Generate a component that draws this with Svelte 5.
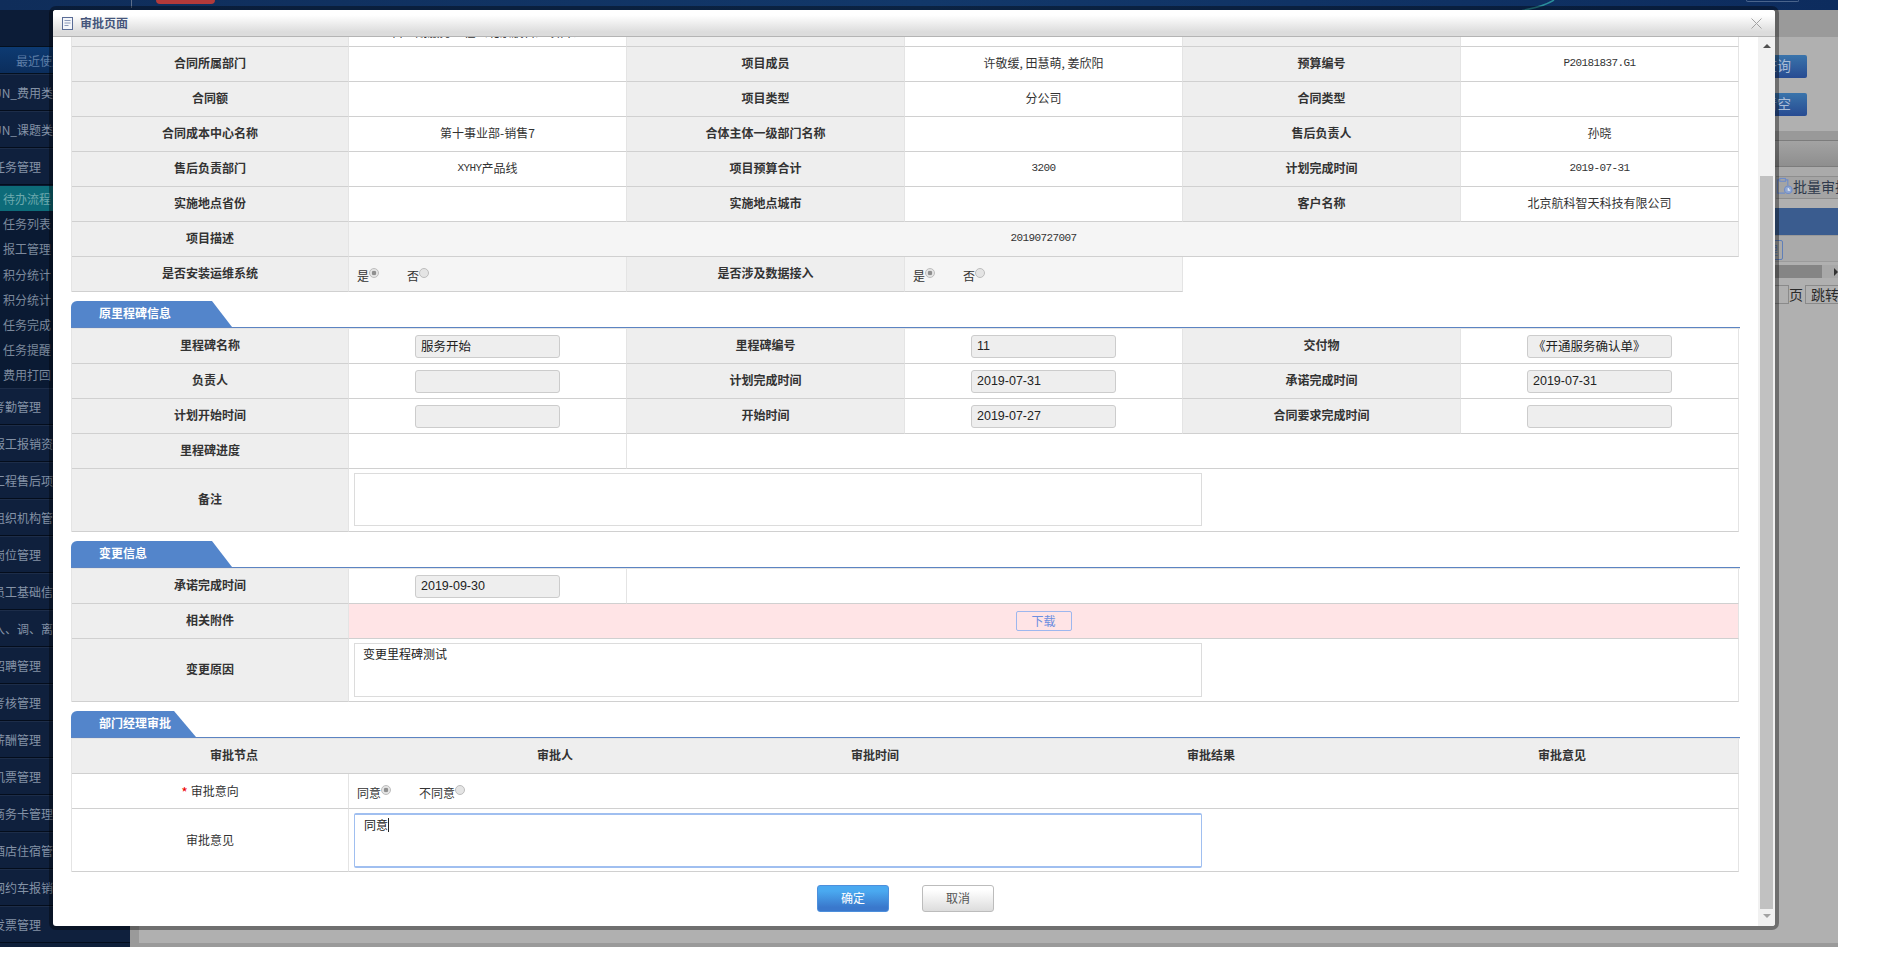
<script>
  const sideTop = ['UN_费用类', 'UN_课题类', '任务管理'];
  const sideSub = ['待办流程', '任务列表', '报工管理', '积分统计', '积分统计', '任务完成', '任务提醒', '费用打回'];
  const sideRest = ['考勤管理', '报工报销资', '工程售后项', '组织机构管', '岗位管理', '员工基础信', '入、调、离', '招聘管理', '考核管理', '薪酬管理', '机票管理', '商务卡管理', '酒店住宿管', '网约车报销', '发票管理'];

  const contract = [
    ['合同所属部门', '', '项目成员', '许敬缓, 田慧萌, 姜欣阳', '预算编号', 'P20181837.G1'],
    ['合同额', '', '项目类型', '分公司', '合同类型', ''],
    ['合同成本中心名称', '第十事业部-销售7', '合体主体一级部门名称', '', '售后负责人', '孙晓'],
    ['售后负责部门', 'XYHY产品线', '项目预算合计', '3200', '计划完成时间', '2019-07-31'],
    ['实施地点省份', '', '实施地点城市', '', '客户名称', '北京航科智天科技有限公司']
  ];
  const milestone = [
    ['里程碑名称', '服务开始', '里程碑编号', '11', '交付物', '《开通服务确认单》'],
    ['负责人', '', '计划完成时间', '2019-07-31', '承诺完成时间', '2019-07-31'],
    ['计划开始时间', '', '开始时间', '2019-07-27', '合同要求完成时间', '']
  ];
  const approvalHead = ['审批节点', '审批人', '审批时间', '审批结果', '审批意见'];
  const latin = /^[A-Z0-9.\-]+$/;
</script>

{#snippet choice(label, on)}
  <label class="choice"><span>{label}</span><input type="radio" disabled checked={on} /></label>
{/snippet}

<div class="page">
  <div class="topbar">
    <span class="clock">2019-07-04 16:35</span>
    <i class="tick"></i>
    <i class="pill"></i>
    <svg class="arc" width="46" height="10" viewBox="0 0 46 10"><path d="M0 10.5 C14 8 24 5 32 0" fill="none" stroke="#2b8f9b" stroke-width="1.5" /></svg>
    <i class="ghost"></i>
  </div>

  <div class="under">
    <nav class="side">
      <div class="side-blank"></div>
      <div class="side-recent">最近使用</div>
      {#each sideTop as s}<div class="side-item">{s}</div>{/each}
      <div class="side-sub">
        {#each sideSub as s, i}<div class="sub-item" class:active={i === 0}>{s}</div>{/each}
      </div>
      {#each sideRest as s}<div class="side-item">{s}</div>{/each}
    </nav>

    <main class="main">
      <div class="panel">
        <div class="band"></div>
        <div class="query">
          <div class="qbtn">查询</div>
          <div class="qbtn">清空</div>
        </div>
        <div class="gap"></div>
        <div class="ghead"></div>
        <div class="tools">
          <div class="tool">
            <svg width="17" height="18" viewBox="0 0 18 18" fill="none" stroke="#6f8cc8" stroke-width="1.2">
              <path d="M4 2.5H1.5v14h8M10 2.5h2.5v6" />
              <rect x="4" y="1" width="6" height="3" />
              <circle cx="13" cy="13" r="4" fill="#8fa6d2" />
              <path d="M13 11v2.4h2" stroke="#e8eef8" />
            </svg>
            <span>批量审批</span>
          </div>
        </div>
        <div class="bluehead"></div>
        <div class="rowbar"><div class="editbtn">理</div></div>
        <div class="hscroll"><div class="hthumb"></div><i class="harrow"></i></div>
        <div class="pager">
          <div class="pinput"></div>
          <span>页</span>
          <div class="pgo">跳转</div>
        </div>
      </div>
    </main>
  </div>

  <section class="modal">
    <header class="mhead">
      <svg width="12" height="13" viewBox="0 0 12 13" fill="#f3f5f9" stroke="#5a6c96">
        <rect x="0.5" y="0.5" width="10" height="12" />
        <path d="M2.5 3.5h6M2.5 6h6M2.5 8.5h4" stroke="#8b99b8" />
      </svg>
      <h1>审批页面</h1>
      <svg class="close" width="11" height="11" viewBox="0 0 11 11" stroke="#a3a3a3" stroke-width="1"><path d="M.5.5l10 10M10.5.5l-10 10" /></svg>
    </header>

    <div class="mbody">
      <div class="content">
        <div class="tbl first">
          <div class="row cols6 clipped">
            <div class="cell label"></div>
            <div class="cell value lowered">首一期服务工程（北京航科）项目、</div>
            <div class="cell label"></div>
            <div class="cell value"></div>
            <div class="cell label"></div>
            <div class="cell value"></div>
          </div>
          {#each contract as r}
            <div class="row cols6">
              {#each r as c, i}
                {#if i % 2 === 0}
                  <div class="cell label">{c}</div>
                {:else if c.startsWith('XYHY')}
                  <div class="cell value"><span class="mono">XYHY</span>产品线</div>
                {:else}
                  <div class="cell value" class:mono={latin.test(c)}>{c}</div>
                {/if}
              {/each}
            </div>
          {/each}
          <div class="row cols6">
            <div class="cell label">项目描述</div>
            <div class="cell value soft span5 mono">20190727007</div>
          </div>
          <div class="row cols6">
            <div class="cell label">是否安装运维系统</div>
            <div class="cell value soft left">{@render choice('是', true)}{@render choice('否', false)}</div>
            <div class="cell label">是否涉及数据接入</div>
            <div class="cell value soft left">{@render choice('是', true)}{@render choice('否', false)}</div>
          </div>
        </div>

        <div class="section"><div class="tab">原里程碑信息</div></div>
        <div class="tbl">
          {#each milestone as r}
            <div class="row cols6">
              {#each r as c, i}
                {#if i % 2 === 0}
                  <div class="cell label">{c}</div>
                {:else}
                  <div class="cell value flat"><input class="field" disabled value={c} /></div>
                {/if}
              {/each}
            </div>
          {/each}
          <div class="row cols6">
            <div class="cell label">里程碑进度</div>
            <div class="cell value"></div>
            <div class="cell value span4"></div>
          </div>
          <div class="row cols6 tall">
            <div class="cell label">备注</div>
            <div class="cell value span5 left top"><textarea class="area short" readonly></textarea></div>
          </div>
        </div>

        <div class="section"><div class="tab">变更信息</div></div>
        <div class="tbl">
          <div class="row cols6">
            <div class="cell label">承诺完成时间</div>
            <div class="cell value flat"><input class="field" disabled value="2019-09-30" /></div>
            <div class="cell value span4"></div>
          </div>
          <div class="row cols6">
            <div class="cell label">相关附件</div>
            <div class="cell value pink span5 flat"><button class="dl">下载</button></div>
          </div>
          <div class="row cols6 tall">
            <div class="cell label">变更原因</div>
            <div class="cell value span5 left top"><textarea class="area" readonly>变更里程碑测试</textarea></div>
          </div>
        </div>

        <div class="section"><div class="tab narrow">部门经理审批</div></div>
        <div class="tbl">
          <div class="row cols5">
            {#each approvalHead as h}<div class="cell label nosep">{h}</div>{/each}
          </div>
          <div class="row cols6">
            <div class="cell value plain"><em>*</em>审批意向</div>
            <div class="cell value span5 left">{@render choice('同意', true)}{@render choice('不同意', false)}</div>
          </div>
          <div class="row cols6 tall">
            <div class="cell value plain">审批意见</div>
            <div class="cell value span5 left top">
              <div class="area focus">同意<i class="caret"></i></div>
            </div>
          </div>
        </div>

        <div class="actions">
          <button class="btn ok">确定</button>
          <button class="btn cancel">取消</button>
        </div>
      </div>

      <div class="sb">
        <div class="sb-top"><i class="up"></i></div>
        <div class="sb-thumb"></div>
        <div class="sb-bot"><i class="down"></i></div>
      </div>
    </div>
  </section>
</div>

<style>
  :global(body) {
    margin: 0;
    background: #fff;
    overflow: hidden;
    font-family: "Noto Sans CJK SC", "Liberation Sans", sans-serif;
    font-size: 12px;
    color: #333;
  }
  * { box-sizing: border-box; }
  i { display: block; }

  .page {
    position: relative;
    width: 1838px;
    height: 947px;
    overflow: hidden;
    display: flex;
    flex-direction: column;
  }

  .topbar {
    height: 10px;
    flex: none;
    display: flex;
    overflow: hidden;
    background: linear-gradient(90deg, #0f2d5a, #12386a 50%, #0d2c5e);
  }
  .clock {
    color: #c8d0dc;
    font: 14px/14px "Liberation Sans", sans-serif;
    margin: -12px 0 0 10px;
    width: 121px;
    white-space: nowrap;
    flex: none;
  }
  .tick { width: 1px; height: 8px; background: #5c6f8c; flex: none; }
  .pill { width: 59px; height: 4px; background: #b33a3a; border-radius: 0 0 12px 12px; margin-left: 24px; flex: none; }
  .arc { margin-left: 1307px; flex: none; }
  .ghost { width: 53px; height: 2px; border: 1px solid #4a648c; border-top: 0; border-radius: 0 0 5px 5px; margin-left: 178px; flex: none; }

  .under { flex: 1; display: flex; min-height: 0; }

  .side {
    width: 130px;
    flex: none;
    background: #0e1f3a;
    color: #8492a6;
    overflow: hidden;
    font-size: 12px;
  }
  .side-blank { height: 37px; background: #0c1c37; border-bottom: 1px solid #04101f; }
  .side-recent {
    height: 27px;
    line-height: 27px;
    padding-left: 16px;
    color: #5d7da6;
    background: linear-gradient(#0d3a72, #0b2d5c);
    white-space: nowrap;
    border-bottom: 1px solid #04101f;
  }
  .side-item {
    height: 37px;
    line-height: 36px;
    text-indent: -7px;
    white-space: nowrap;
    overflow: visible;
    background: #0f203d;
    border-bottom: 1px solid #040d1c;
    border-top: 1px solid #1d2d49;
  }
  .side-sub { background: #0a1a33; height: 203px; padding-top: 1px; }
  .sub-item { height: 25.2px; line-height: 25px; padding-left: 3px; color: #7c899c; white-space: nowrap; }
  .sub-item.active { background: #0d6b79; color: #6ea9ae; }

  .main {
    flex: 1;
    min-width: 0;
    background: #9a9a9a;
    padding: 0 0 4px 9px;
  }
  .panel {
    height: 100%;
    background: #b0b0b0;
    display: flex;
    flex-direction: column;
    overflow: hidden;
  }
  .band { height: 27px; background: #9a9a9a; flex: none; margin-left: -9px; }
  .query {
    height: 94px;
    flex: none;
    display: flex;
    flex-direction: column;
    align-items: flex-end;
    gap: 15px;
    padding: 18px 31px 0 0;
  }
  .qbtn {
    width: 60px;
    height: 23px;
    line-height: 21px;
    text-align: center;
    color: #a9bcd6;
    font-size: 14px;
    border-radius: 2px;
    background: linear-gradient(#3a74ab, #274b92);
  }
  .gap { height: 9px; background: #999; flex: none; }
  .ghead {
    height: 27px;
    flex: none;
    background: linear-gradient(#a3a3a3, #8e8e8e);
    border-top: 1px solid #7c7c7c;
    border-bottom: 1px solid #7c7c7c;
  }
  .tools {
    height: 32px;
    flex: none;
    padding-top: 9px;
    display: flex;
    justify-content: flex-end;
    background: #aaa;
  }
  .tool {
    width: 120px;
    height: 23px;
    margin-right: -58px;
    display: flex;
    align-items: center;
    padding-bottom: 3px;
    background: #a4a4a4;
    border: 1px solid #8e8e8e;
    border-width: 1px 0;
    font-size: 14px;
    line-height: 18px;
    color: #2f3a4c;
    white-space: nowrap;
    flex: none;
  }
  .tool svg { flex: none; }
  .bluehead { height: 27px; margin-top: 9px; background: #3a5c8f; flex: none; }
  .rowbar { height: 27px; flex: none; display: flex; justify-content: flex-end; padding: 4px 55px 0 0; background: #aaa; border-bottom: 1px solid #9b9b9b; border-top: 1px solid #999; }
  .editbtn { width: 50px; height: 20px; line-height: 18px; text-align: right; padding-right: 4px; border: 1px solid #5f7fb8; border-radius: 2px; color: #5f7fb8; }
  .hscroll { height: 13px; margin-top: 3px; flex: none; display: flex; align-items: center; justify-content: flex-end; background: #a8a8a8; }
  .hthumb { width: 200px; height: 13px; background: #858585; margin-right: 12px; }
  .harrow { width: 0; height: 0; border-left: 4px solid #333; border-top: 4px solid transparent; border-bottom: 4px solid transparent; }
  .pager { display: flex; justify-content: flex-end; align-items: center; margin-top: 7px; height: 19px; flex: none; font-size: 14px; line-height: 17px; color: #2a2a2a; }
  .pinput { width: 30px; height: 19px; border: 1px solid #8a8a8a; flex: none; }
  .pager span { width: 16px; flex: none; }
  .pgo { width: 40px; height: 19px; margin-right: -7px; text-align: center; border: 1px solid #8a8a8a; white-space: nowrap; flex: none; }

  .modal {
    position: absolute;
    left: 53px;
    top: 10px;
    width: 1722px;
    height: 916px;
    background: #fff;
    border-radius: 3px;
    box-shadow: 0 0 0 4px rgba(0, 0, 0, 0.37);
    overflow: hidden;
    display: flex;
    flex-direction: column;
  }
  .mhead {
    height: 27px;
    flex: none;
    display: flex;
    align-items: center;
    padding: 0 13px 0 9px;
    gap: 6px;
    background: linear-gradient(#fff 20%, #dcdcdc 85%);
    border-bottom: 1px solid #b4b4b4;
    position: relative;
    z-index: 1;
  }
  .mhead h1 { margin: 0 0 2px; font-size: 12px; font-weight: 700; color: #46567c; }
  .close { margin-left: auto; }

  .mbody { flex: 1; min-height: 0; display: flex; }
  .content { width: 1687px; padding-left: 18px; flex: none; overflow: hidden; }

  .tbl { width: 1669px; border-left: 1px solid #e4e4e4; border-top: 1px solid #e4e4e4; }
  .tbl.first { margin-top: -25px; border-top: 0; }

  .row { display: grid; height: 35px; }
  .row.tall { height: 63px; }
  .cols6 { grid-template-columns: 277px repeat(5, 278px); }
  .cols5 { grid-template-columns: 324px 318px 322px 350px 353px; }

  .cell {
    display: flex;
    align-items: center;
    justify-content: center;
    padding-bottom: 3px;
    border-right: 1px solid #e4e4e4;
    border-bottom: 1px solid #d0d0d0;
    min-width: 0;
    white-space: nowrap;
  }
  .flat { padding-bottom: 0; }
  .label { background: #eee; font-weight: 700; color: #333; }
  .nosep:not(:last-child) { border-right: 0; }
  .value { background: #fff; color: #333; }
  .soft { background: #f5f5f5; }
  .pink { background: #ffe4e6; }
  .span5 { grid-column: span 5; }
  .span4 { grid-column: span 4; }
  .left { justify-content: flex-start; padding-left: 8px; padding-bottom: 0; }
  .top { align-items: flex-start; padding: 4px 0 0 5px; }
  .mono { font-family: "Liberation Mono", monospace; font-size: 11px; letter-spacing: -0.6px; }
  .lowered { padding-top: 8px; }
  .plain { padding-bottom: 2px; }
  .plain em { color: #e00; font-style: normal; font-size: 14px; line-height: 14px; margin: 3px 3px 0 0; }

  .choice { display: flex; align-items: flex-start; margin-right: 28px; line-height: 17px; padding-top: 2px; }
  .choice input {
    appearance: none;
    width: 10px;
    height: 10px;
    margin: 1px 0 0 0;
    border: 1px solid #bdbdbd;
    border-radius: 50%;
    background: #e4e4e4;
  }
  .choice input:checked { background: radial-gradient(circle, #8f8f8f 0 2px, #e4e4e4 2.6px); }

  .field {
    width: 145px;
    height: 23px;
    padding: 0 5px 1px;
    background: #eee;
    border: 1px solid #ccc;
    border-radius: 3px;
    font: 12.5px "Liberation Sans", "Noto Sans CJK SC", sans-serif;
    color: #222;
    opacity: 1;
    -webkit-text-fill-color: #222;
  }

  .area {
    display: block;
    width: 848px;
    height: 54px;
    padding: 2px 8px;
    resize: none;
    border: 1px solid #dcdcdc;
    background: #fff;
    font: 12px/15px "Noto Sans CJK SC", sans-serif;
    color: #222;
    outline: 0;
    overflow: hidden;
  }
  .area.short { height: 53px; }
  .area.focus {
    height: 55px;
    border: 2px solid #a0bff0;
    border-width: 2px 1px;
    border-radius: 2px;
    padding: 2px 9px;
    display: flex;
    align-items: flex-start;
  }
  .caret { width: 1px; height: 14px; background: #222; margin-top: 1px; }

  .dl {
    width: 56px;
    height: 20px;
    padding: 0 0 2px;
    border: 1px solid #9db7ee;
    border-radius: 2px;
    background: transparent;
    color: #6d8fe0;
    font: 12px "Noto Sans CJK SC", sans-serif;
  }

  .section { height: 27px; margin-top: 9px; border-bottom: 1px solid #5c84c2; width: 1669px; }
  .tab {
    width: 161px;
    height: 26px;
    line-height: 24px;
    padding-left: 28px;
    color: #fff;
    font-weight: 700;
    background: #5385cb;
    border-radius: 6px 0 0 0;
    clip-path: polygon(0 0, calc(100% - 20px) 0, 100% 100%, 0 100%);
    white-space: nowrap;
  }
  .tab.narrow { width: 125px; clip-path: polygon(0 0, calc(100% - 22px) 0, 100% 100%, 0 100%); }

  .actions { display: flex; justify-content: center; gap: 33px; width: 1669px; margin-top: 13px; }
  .btn { width: 72px; height: 27px; padding: 0 0 2px; border-radius: 3px; font: 12px "Noto Sans CJK SC", sans-serif; }
  .ok { color: #fff; border: 1px solid #4d8fdc; background: linear-gradient(#4aa9f0 20%, #3a78cc 85%); }
  .cancel { color: #555; border: 1px solid #bcbcbc; background: linear-gradient(#fff 15%, #dcdcdc); }

  .sb { width: 17px; margin-left: 18px; flex: none; background: #f1f1f1; display: flex; flex-direction: column; align-items: center; }
  .sb-top { height: 139px; flex: none; padding-top: 7px; }
  .sb-thumb { height: 733px; width: 13px; background: #c1c1c1; flex: none; }
  .sb-bot { height: 17px; flex: none; padding-top: 5px; }
  .up { width: 0; height: 0; border: 4px solid transparent; border-top: 0; border-bottom: 4px solid #505050; }
  .down { width: 0; height: 0; border: 4px solid transparent; border-bottom: 0; border-top: 4px solid #a3a3a3; }
</style>
